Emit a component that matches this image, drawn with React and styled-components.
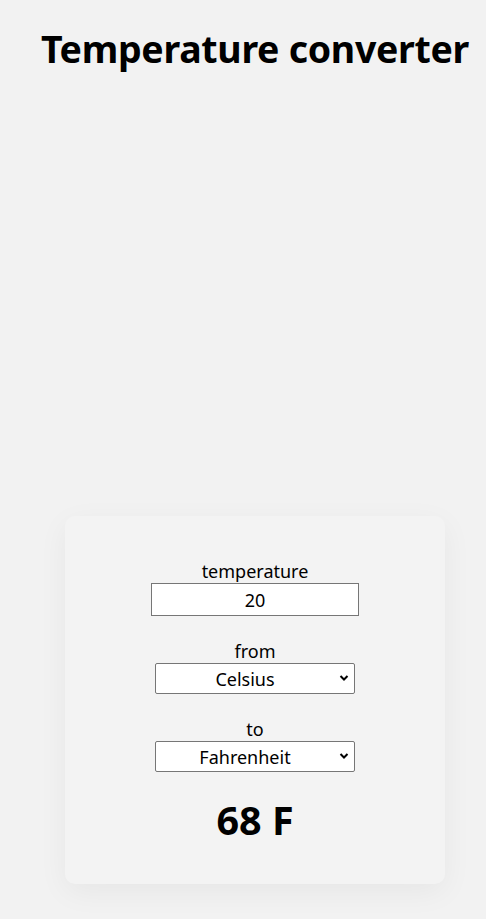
import React, { useState } from "react";
import styled, { createGlobalStyle } from "styled-components";

const GlobalStyle = createGlobalStyle`
  html, body {
    margin: 0;
    padding: 0;
    background: #f2f2f2;
  }
  body {
    font-family: "Noto Sans", "Open Sans", sans-serif;
    color: #000;
  }
`;

const Page = styled.div`
  min-height: 100vh;
  box-sizing: border-box;
  padding: 0 0 35px 24px;
  display: flex;
  flex-direction: column;
  align-items: center;
`;

const Title = styled.h1`
  margin: 22px 0 0;
  font-size: 37.5px;
  font-weight: 700;
  line-height: 54px;
  letter-spacing: -0.3px;
`;

const Card = styled.div`
  margin-top: auto;
  width: 380px;
  height: 368px;
  box-sizing: border-box;
  padding-top: 43px;
  background: #f3f3f3;
  border-radius: 10px;
  box-shadow: 0 8px 30px rgba(0, 0, 0, 0.05);
  display: flex;
  flex-direction: column;
  align-items: center;
`;

const Field = styled.div`
  display: flex;
  flex-direction: column;
  align-items: center;
  margin-bottom: 23px;
`;

const Label = styled.label`
  font-size: 18px;
  line-height: 24px;
`;

const Input = styled.input`
  width: 208px;
  height: 33px;
  box-sizing: border-box;
  border: 1px solid #767676;
  border-radius: 0;
  background: #fff;
  font-family: inherit;
  font-size: 18px;
  text-align: center;
  padding: 0;
  outline: none;
`;

const SelectWrap = styled.div`
  position: relative;
  width: 200px;
  height: 31px;
`;

const Select = styled.select`
  appearance: none;
  width: 100%;
  height: 100%;
  box-sizing: border-box;
  border: 1px solid #767676;
  border-radius: 2px;
  background: #fff;
  font-family: inherit;
  font-size: 18px;
  color: #000;
  text-align: center;
  text-align-last: center;
  padding: 0 20px 0 0;
  outline: none;
`;

const Chevron = styled.svg`
  position: absolute;
  right: 6px;
  top: 11px;
  pointer-events: none;
`;

const Result = styled.div`
  margin-top: -2px;
  font-size: 39.5px;
  font-weight: 700;
  line-height: 54px;
`;

const Arrow = () => (
  <Chevron width="10" height="8" viewBox="0 0 10 8">
    <path d="M1.5 2 L5 5.5 L8.5 2" fill="none" stroke="#000" strokeWidth="2" />
  </Chevron>
);

const units = ["Celsius", "Fahrenheit", "Kelvin"];

const convert = (t, from, to) => {
  let c = t;
  if (from === "Fahrenheit") c = ((t - 32) * 5) / 9;
  if (from === "Kelvin") c = t - 273.15;
  if (to === "Fahrenheit") return (c * 9) / 5 + 32;
  if (to === "Kelvin") return c + 273.15;
  return c;
};

export default function App() {
  const [temp, setTemp] = useState("20");
  const [from, setFrom] = useState("Celsius");
  const [to, setTo] = useState("Fahrenheit");
  const value = Math.round(convert(Number(temp), from, to) * 100) / 100;

  return (
    <>
      <GlobalStyle />
      <Page>
        <Title>Temperature converter</Title>
        <Card>
          <Field>
            <Label>temperature</Label>
            <Input value={temp} onChange={e => setTemp(e.target.value)} />
          </Field>
          <Field>
            <Label>from</Label>
            <SelectWrap>
              <Select value={from} onChange={e => setFrom(e.target.value)}>
                {units.map(u => (
                  <option key={u}>{u}</option>
                ))}
              </Select>
              <Arrow />
            </SelectWrap>
          </Field>
          <Field>
            <Label>to</Label>
            <SelectWrap>
              <Select value={to} onChange={e => setTo(e.target.value)}>
                {units.map(u => (
                  <option key={u}>{u}</option>
                ))}
              </Select>
              <Arrow />
            </SelectWrap>
          </Field>
          <Result>
            {value} {to[0]}
          </Result>
        </Card>
      </Page>
    </>
  );
}
